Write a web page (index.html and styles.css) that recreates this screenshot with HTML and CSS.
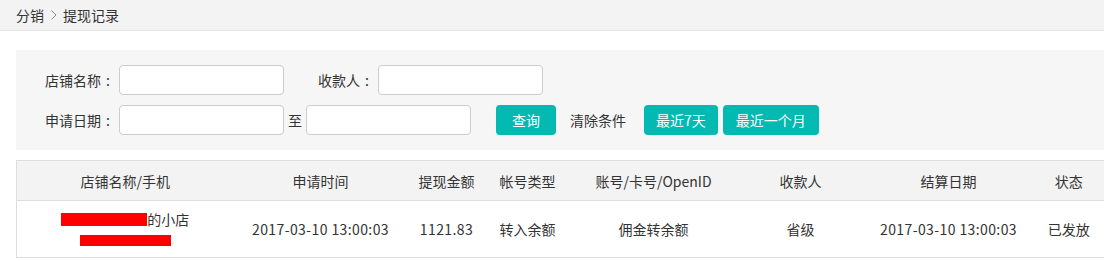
FILE: index.html
```html
<!DOCTYPE html>
<html lang="zh-CN">
<head>
  <meta charset="UTF-8" />
  <title>提现记录</title>
  <link rel="stylesheet" href="styles.css">
</head>
<body>

  <!-- BREADCRUMB -->
  <div class="crumbs">
    <span>分销</span>
    <svg class="sep" width="6" height="10" viewBox="0 0 6 10"><path d="M0.5 0.5 L5 5 L0.5 9.5" fill="none" stroke="#8a8a8a" stroke-width="1"/></svg>
    <span>提现记录</span>
  </div>

  <div class="content">

    <!-- FILTERS -->
    <div class="filter">
      <div class="filter-row">
        <label class="lbl">店铺名称<span class="colon">:</span></label>
        <input type="text" class="ipt" />
        <label class="lbl lbl-short">收款人<span class="colon">:</span></label>
        <input type="text" class="ipt" />
      </div>
      <div class="filter-row">
        <label class="lbl">申请日期<span class="colon">:</span></label>
        <input type="text" class="ipt" />
        <span class="to">至</span>
        <input type="text" class="ipt" />
        <button class="btn btn-search">查询</button>
        <a class="clear">清除条件</a>
        <button class="btn">最近7天</button>
        <button class="btn btn-month">最近一个月</button>
      </div>
    </div>

    <!-- LIST -->
    <table class="list">
      <colgroup>
        <col style="width:217px"><col style="width:174px"><col style="width:78px"><col style="width:84px">
        <col style="width:168px"><col style="width:126px"><col style="width:170px"><col style="width:71px">
      </colgroup>
      <thead>
        <tr>
          <th>店铺名称/手机</th>
          <th>申请时间</th>
          <th>提现金额</th>
          <th>帐号类型</th>
          <th>账号/卡号/OpenID</th>
          <th>收款人</th>
          <th>结算日期</th>
          <th>状态</th>
        </tr>
      </thead>
      <tbody>
        <tr>
          <td>
            <div class="shop"><span class="mask mask-name"></span>的小店</div>
            <div class="shop"><span class="mask mask-phone"></span></div>
          </td>
          <td class="num">2017-03-10 13:00:03</td>
          <td class="num">1121.83</td>
          <td>转入余额</td>
          <td>佣金转余额</td>
          <td>省级</td>
          <td class="num">2017-03-10 13:00:03</td>
          <td>已发放</td>
        </tr>
      </tbody>
    </table>

  </div>

</body>
</html>
```

FILE: styles.css
```css
body {
  font-family: "Noto Sans CJK SC", "Noto Sans", sans-serif;
  font-size: 14px;
  color: #333;
  background: #fff;
  margin: 0;
  padding: 0;
}
.crumbs {
  height: 30px;
  padding-left: 16px;
  background: #f3f3f3;
  border-bottom: 1px solid #e6e6e6;
  color: #333;
  display: flex;
  align-items: center;
}
.crumbs .sep {
  margin: 0 6px 0 7px;
}
.content {
  margin: 19px 0 0 16px;
  width: 1088px;
}
.filter {
  background: #f6f6f6;
  padding: 15px 0;
}
.filter-row {
  display: flex;
  align-items: center;
  height: 30px;
}
.filter-row + .filter-row {
  margin-top: 10px;
}
.lbl {
  width: 103px;
  padding-right: 4px;
  box-sizing: border-box;
  text-align: right;
  flex: none;
}
.lbl-short {
  width: 94px;
}
.colon {
  display: inline-block;
  width: 14px;
  text-align: center;
}
.ipt {
  width: 165px;
  height: 30px;
  box-sizing: border-box;
  border: 1px solid #ccc;
  border-radius: 4px;
  background: #fff;
  outline: none;
  padding: 0 6px;
  flex: none;
}
.to {
  margin: 0 4px;
}
.btn {
  height: 30px;
  padding: 0 12px;
  border: none;
  border-radius: 4px;
  background: #02bab2;
  color: #fff;
  font-family: inherit;
  font-size: 14px;
  cursor: pointer;
}
.btn-search {
  margin-left: 25px;
  padding: 0 16px;
}
.btn-month {
  margin-left: 5px;
  padding: 0 13px;
}
.clear {
  margin: 0 18px 0 14px;
  color: #333;
  cursor: pointer;
}
.list {
  width: 1088px;
  margin-top: 10px;
  border-collapse: collapse;
  table-layout: fixed;
  border: 1px solid #ddd;
}
.list th {
  height: 39px;
  background: #f3f3f3;
  font-weight: normal;
  color: #333;
  border-bottom: 1px solid #ddd;
  padding: 0;
  text-align: center;
}
.list td {
  height: 56px;
  text-align: center;
  vertical-align: middle;
  border-bottom: 1px solid #ddd;
  padding: 0;
}
.list .num {
  letter-spacing: 0.4px;
}
.shop {
  line-height: 20px;
}
.mask {
  display: inline-block;
  background: #f00;
  vertical-align: middle;
}
.mask-name {
  width: 86px;
  height: 13px;
  margin-top: -3px;
}
.mask-phone {
  width: 91px;
  height: 11px;
  margin-top: -2px;
}
```
